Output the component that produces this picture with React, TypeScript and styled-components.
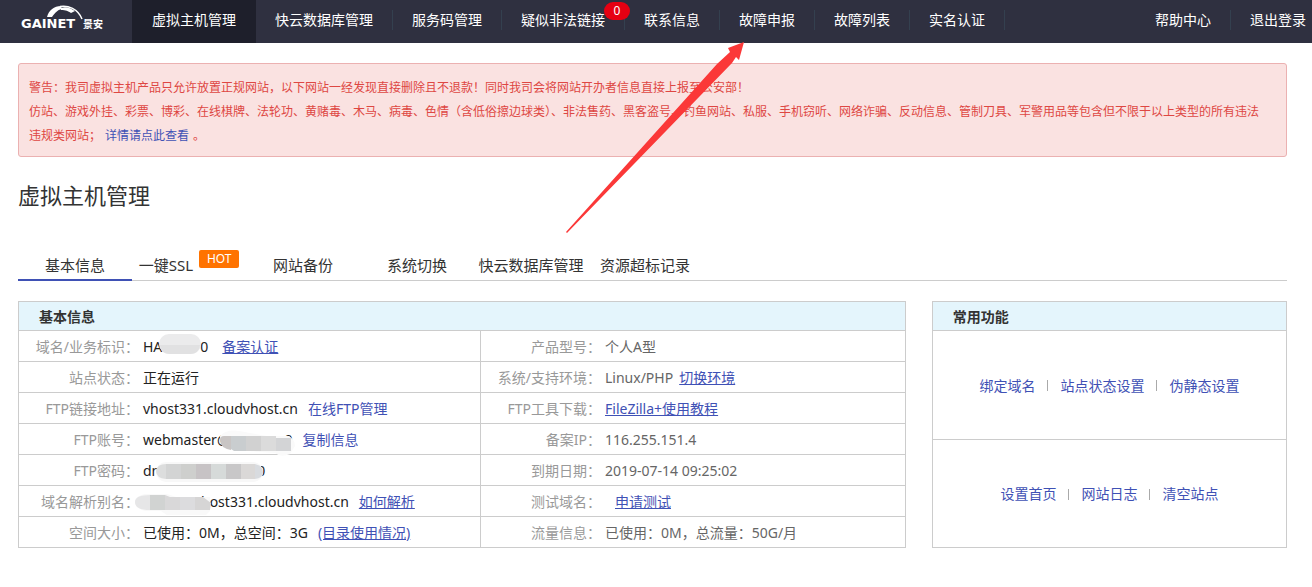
import React from "react";
import styled, { createGlobalStyle } from "styled-components";

const Global = createGlobalStyle`
  * { box-sizing: border-box; }
  body {
    margin: 0;
    background: #fff;
    color: #333;
    font: 14px/20px "Noto Sans", "Noto Sans CJK SC", sans-serif;
  }
  a { color: inherit; text-decoration: none; }
`;

const Page = styled.div`
  position: relative;
`;

const TopBar = styled.header`
  display: flex;
  height: 43px;
  background: #2f3040;
  color: #fff;
`;

const Brand = styled.a`
  flex: none;
  width: 132px;
  padding-left: 20px;
`;

const Menu = styled.nav`
  display: flex;
  flex: none;
`;

const MenuItem = styled.a<{ $active?: boolean }>`
  position: relative;
  display: flex;
  flex: none;
  align-items: center;
  padding: 0 ${(p) => (p.$active ? 20 : 19)}px 3px;
  background: ${(p) => (p.$active ? "#1e1f2b" : "none")};
  white-space: nowrap;
`;

const EndMenu = styled(Menu)`
  margin-left: auto;

  ${MenuItem}:last-child { padding-right: 6px; }
`;

const MenuRule = styled.span`
  flex: none;
  width: 1px;
  height: 20px;
  margin-top: 10px;
  background: #34404f;
`;

const Count = styled.span`
  position: absolute;
  top: 2px;
  right: -6px;
  width: 26px;
  height: 18px;
  border-radius: 9px;
  background: #e60012;
  font-size: 12px;
  line-height: 18px;
  text-align: center;
  z-index: 1;
`;

const Main = styled.main`
  padding: 20px 25px 39px 18px;
`;

const Alert = styled.section`
  padding: 12px 20px 8px 10px;
  border: 1px solid #ebb1b1;
  border-radius: 3px;
  background: #fae2e1;
  color: #de4743;
  font-size: 12px;
  line-height: 24px;

  p { margin: 0; }
  a { margin: 0 4px; color: #3f51b5; }
`;

const Title = styled.h1`
  margin: 22px 0 40px;
  font-size: 22px;
  font-weight: 400;
  line-height: 32px;
`;

const Tabs = styled.nav`
  display: flex;
  height: 30px;
  border-bottom: 1px solid #ccc;
  font-size: 15px;
`;

const Tab = styled.a<{ $active?: boolean }>`
  display: flex;
  flex: none;
  justify-content: center;
  width: 114px;
  height: 30px;
  padding-top: 4px;
  border-bottom: ${(p) => (p.$active ? "2px solid #3f51b5" : "none")};
  white-space: nowrap;
`;

const Hot = styled.span`
  width: 40px;
  height: 18px;
  margin: -5px 0 0 6px;
  border-radius: 2px;
  background: #ff7300;
  color: #fff;
  font-size: 12px;
  line-height: 18px;
  text-align: center;
`;

const Columns = styled.div`
  display: grid;
  grid-template-columns: minmax(0, 5fr) minmax(0, 2fr);
  gap: 26px;
  margin-top: 20px;
`;

const InfoTable = styled.table`
  width: 100%;
  border: 1px solid #ccc;
  border-spacing: 0;
  table-layout: fixed;
`;

const TableHead = styled.th`
  height: 28px;
  padding: 2px 20px 0;
  background: #e4f5fc;
  font-weight: 700;
  text-align: left;
`;

const Label = styled.th`
  height: 31px;
  padding: 1px 0 0;
  border-top: 1px solid #ccc;
  color: #999;
  font-weight: 400;
  text-align: right;
  white-space: nowrap;
`;

const Value = styled.td<{ $muted?: boolean }>`
  padding: 1px 0 0 4px;
  border-top: 1px solid #ccc;
  border-right: ${(p) => (p.$muted ? "none" : "1px solid #ccc")};
  color: ${(p) => (p.$muted ? "#666" : "#222")};
  white-space: nowrap;
`;

const ValueLine = styled.div`
  display: flex;
  align-items: center;
  height: 20px;
`;

const Action = styled.a<{ $plain?: boolean; $gap?: number }>`
  margin-left: ${(p) => p.$gap ?? 10}px;
  color: #3f51b5;
  text-decoration: ${(p) => (p.$plain ? "none" : "underline")};
`;

const Smudge = styled.svg<{ $before?: number; $after?: number }>`
  position: relative;
  flex: none;
  margin: 0 ${(p) => p.$after ?? 0}px 0 ${(p) => p.$before ?? 0}px;
`;

const SidePanel = styled.section`
  display: flex;
  flex-direction: column;
  border: 1px solid #ccc;
`;

const PanelHead = styled.h2`
  margin: 0;
  height: 28px;
  padding: 5px 20px 0;
  background: #e4f5fc;
  font-size: 14px;
  font-weight: 700;
  line-height: 20px;
`;

const Shortcuts = styled.div`
  display: flex;
  flex: 1;
  align-items: center;
  justify-content: center;
  padding-top: 2px;
  border-top: 1px solid #ccc;
  color: #3f51b5;
  white-space: nowrap;

  a + a { display: flex; align-items: center; }
  a + a::before {
    content: "";
    width: 1px;
    height: 11px;
    margin: 0 12px;
    background: #aaa;
  }
`;

const Pointer = styled.svg`
  position: absolute;
  top: 42px;
  left: 566px;
  pointer-events: none;
`;

const Logo = () => (
  <svg width="90" height="36" viewBox="20 0 90 36" role="img" aria-label="GAINET 景安">
    <path d="M47 17C49 10 54 6 61 6l1 3c-5 1-7 4-10 8z" fill="#fff" />
    <path d="M61 8c5-2 9 0 14 3l-4 2c-3-2-5-3-10-3z" fill="#fff" />
    <path d="M60 6.500C68 5 78 9 82 19" fill="none" stroke="#fff" strokeWidth="1.500" />
    <text x="21" y="28" fill="#fff" fontFamily="DejaVu Sans, sans-serif" fontSize="13" fontWeight="700">GAINET</text>
    <text x="83" y="28" fill="#fff" fontFamily="Noto Sans CJK SC, sans-serif" fontSize="10" fontWeight="700">景安</text>
  </svg>
);

const menu = ["快云数据库管理", "服务码管理", "疑似非法链接", "联系信息", "故障申报", "故障列表", "实名认证"];

type Row = { label: string; value: React.ReactNode; label2: string; value2: React.ReactNode };

const rows: Row[] = [
  {
    label: "域名/业务标识：",
    value: (
      <>
        HA
        <Smudge width="42" height="26" $before={-3} $after={-1}>
          <rect width="42" height="20" rx="10" fill="#ebebec" />
          <path d="M1 11h40q-1 9-10 9H11q-9 0-10-9z" fill="#e1e1e2" />
        </Smudge>
        0<Action href="#" $gap={14}>备案认证</Action>
      </>
    ),
    label2: "产品型号：",
    value2: "个人A型",
  },
  {
    label: "站点状态：",
    value: "正在运行",
    label2: "系统/支持环境：",
    value2: <>Linux/PHP<Action href="#" $gap={6}>切换环境</Action></>,
  },
  {
    label: "FTP链接地址：",
    value: <>vhost331.cloudvhost.cn<Action href="#" $plain>在线FTP管理</Action></>,
    label2: "FTP工具下载：",
    value2: <Action href="#" $gap={0}>FileZilla+使用教程</Action>,
  },
  {
    label: "FTP账号：",
    value: (
      <>
        webmaster@
        <Smudge width="76" height="32" viewBox="0 -6 76 32" $before={-10} $after={-11}>
          <path d="M1 6Q8-1 20 1l28 5h22q6 4 6 10l-5 8q-9 4-15-1L16 20Q1 19 1 6z" fill="#fafafa" />
          <path d="M12 6v14Q1 18 1 10q0-4 4-4z" fill="#c9c5c4" />
          <path d="M12 6h15v15H15l-3-2z" fill="#c9cdcf" />
          <path d="M27 6h15v15H27z" fill="#d1d1d1" />
          <path d="M42 6h15v15H42z" fill="#dbdbdb" />
          <path d="M57 8h15v13H57z" fill="#d3d4d6" />
        </Smudge>
        0<Action href="#" $plain>复制信息</Action>
      </>
    ),
    label2: "备案IP：",
    value2: "116.255.151.4",
  },
  {
    label: "FTP密码：",
    value: (
      <>
        dn
        <Smudge width="107" height="22" viewBox="0 -2 107 22" $before={-4} $after={-6}>
          <rect width="107" height="20" rx="10" fill="#f8f8f8" />
          <path d="M10 2v15Q0 16 0 9q1-7 10-7z" fill="#dcdddd" />
          <path d="M10 2h15v15H10z" fill="#d3d4d4" />
          <path d="M25 2h15v15H25z" fill="#cecfcd" />
          <path d="M40 2h15v15H40z" fill="#c7c3c5" />
          <path d="M55 2h15v15H55z" fill="#d6dad9" />
          <path d="M70 2h15v15H70z" fill="#c8c7c8" />
          <path d="M85 2h14v15H85z" fill="#dad8d7" />
          <path d="M99 2q8 2 8 8t-8 7z" fill="#d8dbdf" />
        </Smudge>
        0
      </>
    ),
    label2: "到期日期：",
    value2: "2019-07-14 09:25:02",
  },
  {
    label: "域名解析别名：",
    value: (
      <>
        <Smudge width="76" height="28" viewBox="0 -4 76 28" $before={-8} $after={-10}>
          <path d="M10 2h22l9 3h34v14l-4 4H32l-6-4H10Q0 16 0 10t10-8z" fill="#f9f9f9" />
          <path d="M15 3v15Q0 18 0 10q0-7 15-7z" fill="#e6e6e7" />
          <path d="M15 3h15v15H15z" fill="#d1d3d2" />
          <path d="M30 3l5 2h10v13H30z" fill="#d9d8d9" />
          <path d="M45 5h15v13H45z" fill="#dcdcde" />
          <path d="M60 5h8l8 6-1 7H60z" fill="#d6d5d5" />
        </Smudge>
        host331.cloudvhost.cn<Action href="#">如何解析</Action>
      </>
    ),
    label2: "测试域名：",
    value2: <Action href="#">申请测试</Action>,
  },
  {
    label: "空间大小：",
    value: <>已使用：0M，总空间：3G<Action href="#">(目录使用情况)</Action></>,
    label2: "流量信息：",
    value2: "已使用：0M，总流量：50G/月",
  },
];

export default function App() {
  return (
    <Page lang="zh-CN">
      <Global />
      <TopBar>
        <Brand href="#"><Logo /></Brand>
        <Menu aria-label="主菜单">
          <MenuItem href="#" $active aria-current="page">虚拟主机管理</MenuItem>
          {menu.map((name) => (
            <React.Fragment key={name}>
              <MenuItem href="#">
                {name}
                {name === "疑似非法链接" && <Count>0</Count>}
              </MenuItem>
              <MenuRule />
            </React.Fragment>
          ))}
        </Menu>
        <EndMenu aria-label="账户">
          <MenuItem href="#">帮助中心</MenuItem>
          <MenuRule />
          <MenuItem href="#">退出登录</MenuItem>
        </EndMenu>
      </TopBar>

      <Main>
        <Alert role="alert">
          <p>警告：我司虚拟主机产品只允许放置正规网站，以下网站一经发现直接删除且不退款！同时我司会将网站开办者信息直接上报至公安部！</p>
          <p>
            仿站、游戏外挂、彩票、博彩、在线棋牌、法轮功、黄赌毒、木马、病毒、色情（含低俗擦边球类）、非法售药、黑客盗号、钓鱼网站、私服、手机窃听、网络诈骗、反动信息、管制刀具、军警用品等包含但不限于以上类型的所有违法违规类网站；
            <a href="#">详情请点此查看</a>。
          </p>
        </Alert>

        <Title>虚拟主机管理</Title>

        <Tabs aria-label="主机功能">
          <Tab href="#" $active aria-current="page">基本信息</Tab>
          <Tab href="#">一键SSL<Hot>HOT</Hot></Tab>
          <Tab href="#">网站备份</Tab>
          <Tab href="#">系统切换</Tab>
          <Tab href="#">快云数据库管理</Tab>
          <Tab href="#">资源超标记录</Tab>
        </Tabs>

        <Columns>
          <InfoTable>
            <colgroup>
              <col width="120" />
              <col width="342" />
              <col width="120" />
              <col />
            </colgroup>
            <thead>
              <tr><TableHead colSpan={4}>基本信息</TableHead></tr>
            </thead>
            <tbody>
              {rows.map((r) => (
                <tr key={r.label}>
                  <Label scope="row">{r.label}</Label>
                  <Value><ValueLine>{r.value}</ValueLine></Value>
                  <Label scope="row">{r.label2}</Label>
                  <Value $muted><ValueLine>{r.value2}</ValueLine></Value>
                </tr>
              ))}
            </tbody>
          </InfoTable>

          <SidePanel>
            <PanelHead>常用功能</PanelHead>
            <Shortcuts>
              <a href="#">绑定域名</a>
              <a href="#">站点状态设置</a>
              <a href="#">伪静态设置</a>
            </Shortcuts>
            <Shortcuts>
              <a href="#">设置首页</a>
              <a href="#">网站日志</a>
              <a href="#">清空站点</a>
            </Shortcuts>
          </SidePanel>
        </Columns>
      </Main>

      <Pointer width="180" height="192" viewBox="0 0 180 192" aria-hidden="true">
        <path d="M178 0L173 18l-3-3L166 21 1 191 0 190 151 22 164 10l-2-4z" fill="#fb3838" />
      </Pointer>
    </Page>
  );
}
